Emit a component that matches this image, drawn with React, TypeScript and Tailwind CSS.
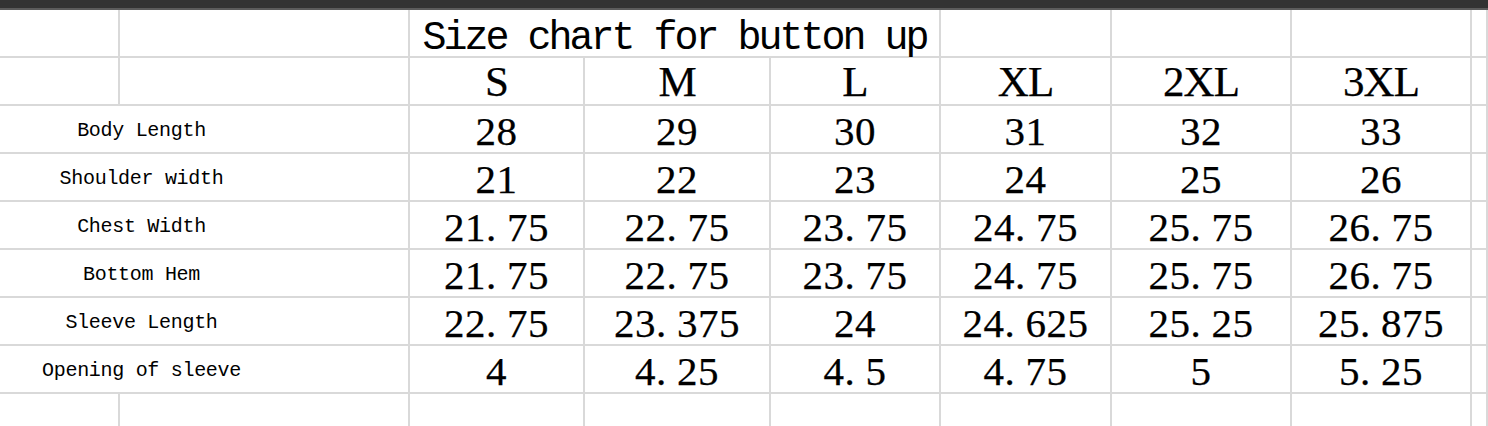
const sizes = ['S', 'M', 'L', 'XL', '2XL', '3XL'];

// widths of the size columns, in px (right grid line included)
const colWidths = ['w-[175px]', 'w-[186px]', 'w-[170px]', 'w-[171px]', 'w-[180px]', 'w-[180px]'];

const rows: { label: string; values: string[] }[] = [
  { label: 'Body Length', values: ['28', '29', '30', '31', '32', '33'] },
  { label: 'Shoulder width', values: ['21', '22', '23', '24', '25', '26'] },
  { label: 'Chest Width', values: ['21.75', '22.75', '23.75', '24.75', '25.75', '26.75'] },
  { label: 'Bottom Hem', values: ['21.75', '22.75', '23.75', '24.75', '25.75', '26.75'] },
  { label: 'Sleeve Length', values: ['22.75', '23.375', '24', '24.625', '25.25', '25.875'] },
  { label: 'Opening of sleeve', values: ['4', '4.25', '4.5', '4.75', '5', '5.25'] },
];

const cell = 'h-[48px] shrink-0 border-r-2 border-b-2 border-[#d9d9d9] flex justify-center';
const serif = "font-['Liberation_Serif',serif] leading-none text-black [-webkit-text-stroke:0.25px_#000]";
const mono = "font-['Liberation_Mono',monospace] text-black";

// the period takes a full digit slot, like the sheet's font
function Num({ v }: { v: string }) {
  const [a, b] = v.split('.');
  return (
    <span className={`${serif} text-[41px] tracking-[0.5px]`}>
      {a}
      {b !== undefined && (
        <>
          <span className="inline-block w-[21px]">.</span>
          {b}
        </>
      )}
    </span>
  );
}

export default function App() {
  return (
    <div className="w-[1488px] h-[426px] bg-white overflow-hidden">
      <div className="h-[8px] bg-[#333333]" />
      <div className="h-[2px] bg-[#5c5c5c]" />

      {/* title row */}
      <div className="flex">
        <div className={`${cell} w-[120px]`} />
        <div className={`${cell} w-[290px]`} />
        <div className={`${cell} w-[531px] items-end`}>
          <span className={`${mono} text-[40px] leading-none tracking-[-3px] mb-[-3px]`}>Size chart for button up</span>
        </div>
        <div className={`${cell} w-[171px]`} />
        <div className={`${cell} w-[180px]`} />
        <div className={`${cell} w-[180px]`} />
        <div className={`${cell} flex-1`} />
      </div>

      {/* size header */}
      <div className="flex">
        <div className={`${cell} w-[120px]`} />
        <div className={`${cell} w-[290px]`} />
        {sizes.map((s, i) => (
          <div key={s} className={`${cell} ${colWidths[i]} items-end`}>
            <span className={`${serif} text-[43px] tracking-[-1px] mb-[1px]`}>{s}</span>
          </div>
        ))}
        <div className={`${cell} flex-1`} />
      </div>

      {rows.map((r) => (
        <div key={r.label} className="flex">
          <div className={`${cell} w-[410px] items-center justify-start`}>
            <span className={`${mono} w-[283px] text-center text-[20px] tracking-[-0.3px] mt-[3px]`}>{r.label}</span>
          </div>
          {r.values.map((v, i) => (
            <div key={i} className={`${cell} ${colWidths[i]} items-end`}>
              <Num v={v} />
            </div>
          ))}
          <div className={`${cell} flex-1`} />
        </div>
      ))}

      {/* empty trailing row */}
      <div className="flex">
        <div className={`${cell} w-[120px]`} />
        <div className={`${cell} w-[290px]`} />
        {colWidths.map((w, i) => (
          <div key={i} className={`${cell} ${w}`} />
        ))}
        <div className={`${cell} flex-1`} />
      </div>
    </div>
  );
}
